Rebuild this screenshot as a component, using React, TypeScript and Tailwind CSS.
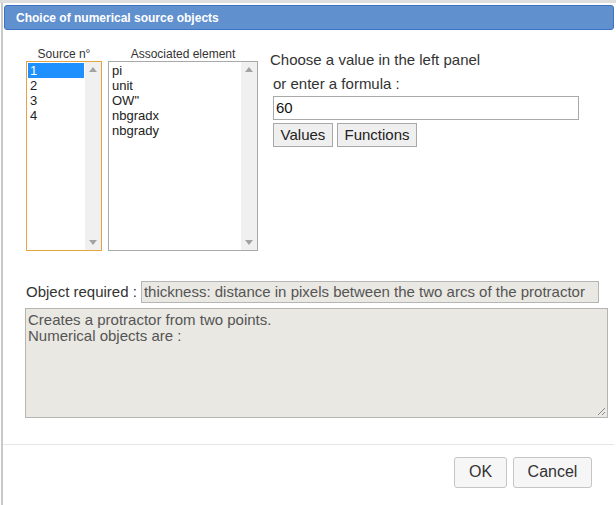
import React from 'react';

const ScrollCol: React.FC = () => (
  <div className="flex w-[16px] flex-col items-center justify-between bg-[#f0f0f0] py-[5px]">
    <svg width="8" height="5" viewBox="0 0 8 5"><path d="M0 5 L4 0 L8 5 Z" fill="#a3a3a3" /></svg>
    <svg width="8" height="5" viewBox="0 0 8 5"><path d="M0 0 L4 5 L8 0 Z" fill="#a3a3a3" /></svg>
  </div>
);

const ListBox: React.FC<{ items: string[]; selected?: number; focused?: boolean; width: string }> = ({ items, selected, focused, width }) => (
  <div className={`flex h-[190px] ${width} border ${focused ? 'border-[#e5a43f]' : 'border-[#a9a9a9]'} bg-white`}>
    <div className="flex-1 p-[1px] text-[13px] leading-[15px] text-[#222]">
      {items.map((it, i) => (
        <div key={it} className={`pl-[2px] ${i === selected ? 'bg-[#1e90ff] text-white' : ''}`}>{it}</div>
      ))}
    </div>
    <ScrollCol />
  </div>
);

export default function App() {
  return (
    <div className="relative h-[505px] w-[616px] overflow-hidden bg-white" style={{ fontFamily: '"Liberation Sans", Arial, sans-serif' }}>
      <div className="h-[3px] w-full bg-[#dedede]" />
      <div className="flex h-[502px] border-l-[2px] border-l-[#c9c9c9] ml-[1px]">
        <div className="flex flex-1 flex-col">
          <div className="mx-[1px] mt-[2px] mr-[2px] flex h-[25px] items-center rounded-[3px] border border-[#3f72c2] bg-[#6190cf] pl-[11px] text-[12px] font-bold text-white">
            Choice of numerical source objects
          </div>

          <div className="flex pl-[23px] pt-[17px]">
            <div className="flex flex-col items-center">
              <div className="h-[14px] text-[12px] leading-[14px] text-[#333]">Source n°</div>
              <ListBox items={['1', '2', '3', '4']} selected={0} focused width="w-[76px]" />
            </div>
            <div className="ml-[6px] flex flex-col items-center">
              <div className="h-[14px] text-[12px] leading-[14px] text-[#333]">Associated element</div>
              <ListBox items={['pi', 'unit', 'OW"', 'nbgradx', 'nbgrady']} width="w-[150px]" />
            </div>
            <div className="ml-[12px] flex flex-col pt-[4px]">
              <div className="text-[15px] leading-[18px] text-[#333]">Choose a value in the left panel</div>
              <div className="ml-[3px] mt-[6px] text-[15px] leading-[18px] text-[#333]">or enter a formula :</div>
              <div className="ml-[3px] mt-[3px] flex h-[24px] w-[306px] items-center border border-[#a9a9a9] bg-white pl-[2px] text-[15px] text-[#111]">60</div>
              <div className="ml-[3px] mt-[3px] flex gap-[4px]">
                <div className="flex h-[24px] w-[60px] items-center justify-center border border-[#a9a9a9] bg-[#efefef] text-[15px] text-[#222]">Values</div>
                <div className="flex h-[24px] w-[80px] items-center justify-center border border-[#a9a9a9] bg-[#efefef] text-[15px] text-[#222]">Functions</div>
              </div>
            </div>
          </div>

          <div className="ml-[23px] mt-[30px] flex items-center">
            <div className="text-[15px] text-[#333]">Object required :</div>
            <div className="ml-[4px] flex h-[22px] w-[458px] items-center border border-[#b5b5b5] bg-[#e9e8e2] pl-[2px] text-[15px] text-[#555]">
              thickness: distance in pixels between the two arcs of the protractor
            </div>
          </div>

          <div className="relative ml-[22px] mt-[4px] h-[110px] w-[583px] border border-[#b5b5b5] bg-[#e9e8e2] pl-[2px] pt-[3px] text-[15px] leading-[16px] text-[#555]">
            <div>Creates a protractor from two points.</div>
            <div>Numerical objects are :</div>
            <svg className="absolute bottom-[1px] right-[1px]" width="9" height="9" viewBox="0 0 9 9">
              <path d="M8 1 L1 8 M8 5 L5 8" stroke="#8a8a8a" strokeWidth="1" />
            </svg>
          </div>

          <div className="mt-[26px] mr-[2px] h-[1px] bg-[#e5e5e5]" />

          <div className="mt-[12px] flex justify-end gap-[6px] pr-[24px]">
            <div className="flex h-[31px] w-[53px] items-center justify-center rounded-[3px] border border-[#c5c5c5] bg-[#f6f6f6] text-[16px] text-[#333]">OK</div>
            <div className="flex h-[31px] w-[79px] items-center justify-center rounded-[3px] border border-[#c5c5c5] bg-[#f6f6f6] text-[16px] text-[#333]">Cancel</div>
          </div>
        </div>
      </div>
    </div>
  );
}
